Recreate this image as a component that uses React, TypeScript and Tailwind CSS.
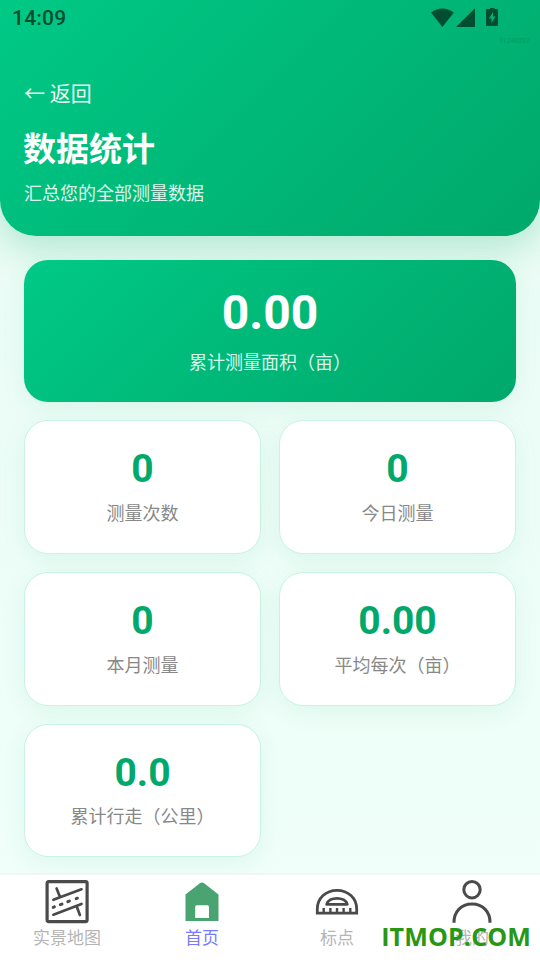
interface Stat {
  label: string;
  value: string;
}

const stats: Stat[] = [
  { label: "测量次数", value: "0" },
  { label: "今日测量", value: "0" },
  { label: "本月测量", value: "0" },
  { label: "平均每次（亩）", value: "0.00" },
  { label: "累计行走（公里）", value: "0.0" },
];

const MapIcon = () => (
  <svg width="44" height="44" viewBox="0 0 44 44" fill="none" stroke="#4a4a4a" strokeWidth="3.2">
    <rect x="2.1" y="1.6" width="40" height="40" rx="1.5" />
    <g strokeLinecap="round" strokeWidth="2.7">
      <path d="M8.4 19.8 36.5 9.3M8.4 34.7 36.5 23.9M11.6 8.5 14.8 16.5M31.8 26.8 34.9 35" />
      <path d="M8.2 27.3 9.4 26.8M15.4 24.7 17 24.1M22.8 21.7 24.4 21.1M31.2 18.7 32.4 18.2" strokeWidth="3" />
    </g>
  </svg>
);

const HomeIcon = () => (
  <svg width="44" height="44" viewBox="0 0 44 44" fill="#4aa471">
    <path
      fillRule="evenodd"
      d="M5.5 14.5 20.2 3Q22 1.8 23.8 3L38.5 14.5V41H5.5ZM16.7 25.2Q15.2 25.2 15.2 26.7V38H29V26.7Q29 25.2 27.5 25.2Z"
    />
  </svg>
);

const ProtractorIcon = () => (
  <svg width="44" height="44" viewBox="0 0 44 44" fill="none" stroke="#4a4a4a" strokeWidth="2.8">
    <path d="M2.3 33.2V29C2.3 18 11 10.3 22 10.3S41.7 18 41.7 29V33.2Z" />
    <path d="M11.7 24.4C13.7 16.3 30.3 16.3 32.3 24.4Z" strokeLinejoin="round" />
    <path d="M8.7 28V34M15.4 28V34M22 28V34M28.6 28V34M35.3 28V34" strokeWidth="2.4" />
  </svg>
);

const UserIcon = () => (
  <svg width="44" height="44" viewBox="0 0 44 44" fill="none" stroke="#4a4a4a" strokeWidth="3">
    <circle cx="22" cy="9.7" r="8.2" />
    <path d="M4 42.8C3.7 32 11 24 22 24S40.3 32 40 42.8" />
  </svg>
);

const tabs = [
  { label: "实景地图", icon: <MapIcon />, active: false },
  { label: "首页", icon: <HomeIcon />, active: true },
  { label: "标点", icon: <ProtractorIcon />, active: false },
  { label: "我的", icon: <UserIcon />, active: false },
];

const StatusBar = () => (
  <div className="relative flex h-9 items-center justify-between pl-3 pr-[41px] text-[#004d32]">
    <span className="font-[Roboto] text-[21px] leading-6 font-medium tracking-[0.2px]">14:09</span>
    <svg width="68" height="20" viewBox="0 0 68 20" fill="currentColor">
      <path d="M0 4.6Q11.3-3.5 22.8 4.6L11.4 19Z" />
      <path d="M25 19 44 .3V19Z" />
      <path
        fillRule="evenodd"
        d="M57 1H59V0H63.5V1H66Q67 1 67 2V17Q67 18 66 18H56Q55 18 55 17V2Q55 1 56 1ZM62 4 58 10.5H60.5V15L64.5 8.5H62Z"
      />
    </svg>
    <span className="absolute top-[35px] right-[10px] font-[Roboto] text-[7px] leading-3 text-[#008f5d] opacity-60">
      f1248237
    </span>
  </div>
);

const StatCard = ({ label, value }: Stat) => (
  <div className="flex h-[133.6px] flex-col items-center rounded-3xl border border-[#c9f3e4] bg-white pt-[25px] shadow-[0_6px_24px_rgba(0,168,107,0.08)]">
    <span className="font-[Roboto] text-[39px] leading-[47px] font-bold text-[#00a86b]">{value}</span>
    <span className="mt-[5.8px] text-[18px] leading-[27px] text-[#888888]">{label}</span>
  </div>
);

export default function App() {
  return (
    <div className="flex h-[960px] w-[540px] flex-col overflow-hidden bg-linear-to-b from-[#e8fbf4] to-[#f0fffa] font-['Noto_Sans_CJK_SC',sans-serif]">
      <header className="h-[236px] shrink-0 rounded-b-[36px] bg-[linear-gradient(135deg,#00c986_0%,#00a86b_100%)] text-white shadow-[0_12px_36px_rgba(0,168,107,0.25)]">
        <StatusBar />
        <div className="px-6 pt-10">
          <button className="block text-[21px] leading-[32px] opacity-90">
            <span>←</span> 返回
          </button>
          <h1 className="mt-[15px] -ml-px text-[33px] leading-[48px] font-bold">数据统计</h1>
          <p className="mt-2 text-[18px] leading-[27px] opacity-85">汇总您的全部测量数据</p>
        </div>
      </header>

      <main className="relative flex-1 px-6 pt-6">
        <section className="flex h-[142.4px] flex-col items-center rounded-3xl bg-[linear-gradient(135deg,#00c986_0%,#00a86b_100%)] pt-[25px] text-white shadow-[0_6px_24px_rgba(0,168,107,0.08)]">
          <span className="font-[Roboto] text-[48px] leading-[56px] font-bold">0.00</span>
          <span className="mt-[7px] text-[18px] leading-[27px] opacity-85">累计测量面积（亩）</span>
        </section>
        <section className="mt-[18px] grid grid-cols-2 gap-[18px]">
          {stats.map((stat) => (
            <StatCard key={stat.label} {...stat} />
          ))}
        </section>
      </main>

      <nav className="relative grid h-[87px] shrink-0 grid-cols-4 border-t-2 border-[#f4f4f4] bg-white">
        {tabs.map((tab) => (
          <div key={tab.label} className="flex flex-col items-center pt-[5px] pr-px">
            {tab.icon}
            <span
              className={`text-[17px] leading-[26px] ${tab.active ? "text-[#7a7aff]" : "text-[#b5b5b5]"}`}
            >
              {tab.label}
            </span>
          </div>
        ))}
        <span className="absolute right-[9px] bottom-[7px] font-['Open_Sans',sans-serif] text-[25px] leading-[34px] font-bold tracking-[0.15px] text-[#279714]">
          ITMOP.COM
        </span>
      </nav>
    </div>
  );
}
